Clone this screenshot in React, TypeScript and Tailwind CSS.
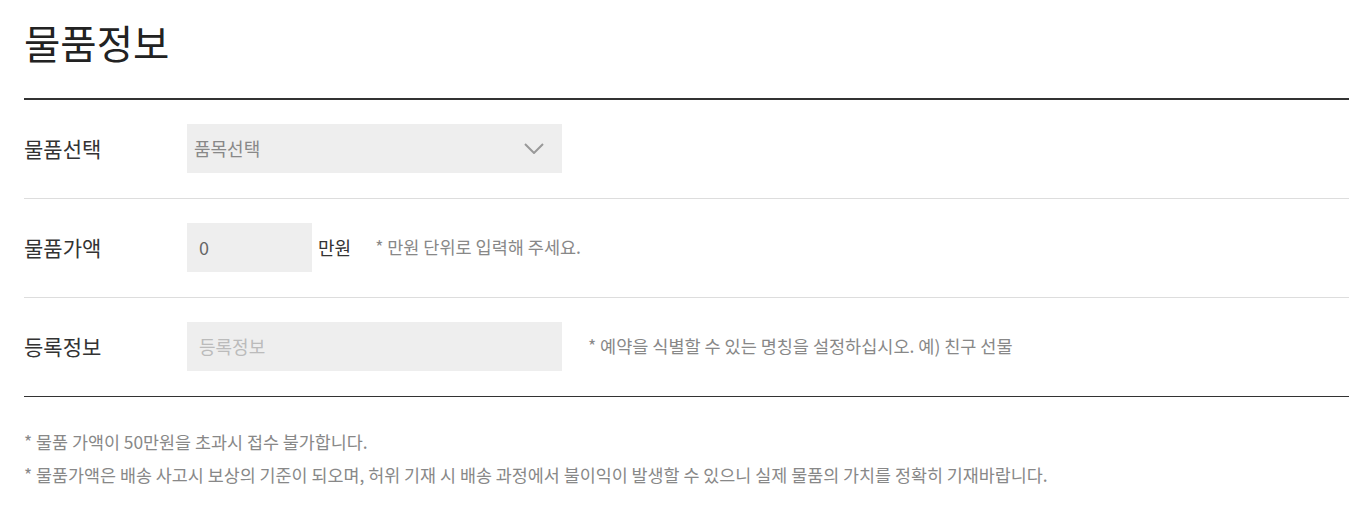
import React from "react";

const font = { fontFamily: '"Noto Sans CJK KR", "Noto Sans", sans-serif' };

function Row({
  label,
  children,
  last = false,
}: {
  label: string;
  children: React.ReactNode;
  last?: boolean;
}) {
  return (
    <div
      className={
        "flex items-center pt-[24px] pb-[25px] " +
        (last ? "border-b border-[#333]" : "border-b border-[#dddddd]")
      }
    >
      <div className="w-[163px] shrink-0 text-[21px] text-[#333]">{label}</div>
      {children}
    </div>
  );
}

export default function App() {
  return (
    <div className="bg-white min-h-[516px] pl-[24px] pr-[2px]" style={font}>
      {/* Header */}
      <div className="h-[100px] border-b-2 border-[#333] pt-[12px]">
        <h1 className="text-[39.5px] leading-[60px] text-[#222]">물품정보</h1>
      </div>

      <Row label="물품선택">
        <button className="w-[375px] h-[49px] bg-[#eeeeee] flex items-center justify-between pl-[7px] pr-[18px] text-[18px] text-[#888]">
          <span>품목선택</span>
          <svg width="20" height="11" viewBox="0 0 20 11" fill="none">
            <path d="M1 1l9 9 9-9" stroke="#999" strokeWidth="2" />
          </svg>
        </button>
      </Row>

      <Row label="물품가액">
        <div className="w-[125px] h-[49px] bg-[#eeeeee] flex items-center pl-[12px] text-[18px] text-[#666]">0</div>
        <span className="ml-[6px] text-[18px] text-[#333]">만원</span>
        <span className="ml-[24px] text-[17.5px] text-[#888]">* 만원 단위로 입력해 주세요.</span>
      </Row>

      <Row label="등록정보" last>
        <div className="w-[375px] h-[49px] bg-[#eeeeee] flex items-center pl-[12px] text-[18px] text-[#bbb]">등록정보</div>
        <span className="ml-[26px] text-[17.5px] text-[#888]">
          * 예약을 식별할 수 있는 명칭을 설정하십시오. 예) 친구 선물
        </span>
      </Row>

      {/* Notes */}
      <div className="pt-[28px] text-[17.4px] leading-[33px] text-[#888]">
        <p>* 물품 가액이 50만원을 초과시 접수 불가합니다.</p>
        <p>
          * 물품가액은 배송 사고시 보상의 기준이 되오며, 허위 기재 시 배송 과정에서 불이익이 발생할 수 있으니 실제 물품의
          가치를 정확히 기재바랍니다.
        </p>
      </div>
    </div>
  );
}
